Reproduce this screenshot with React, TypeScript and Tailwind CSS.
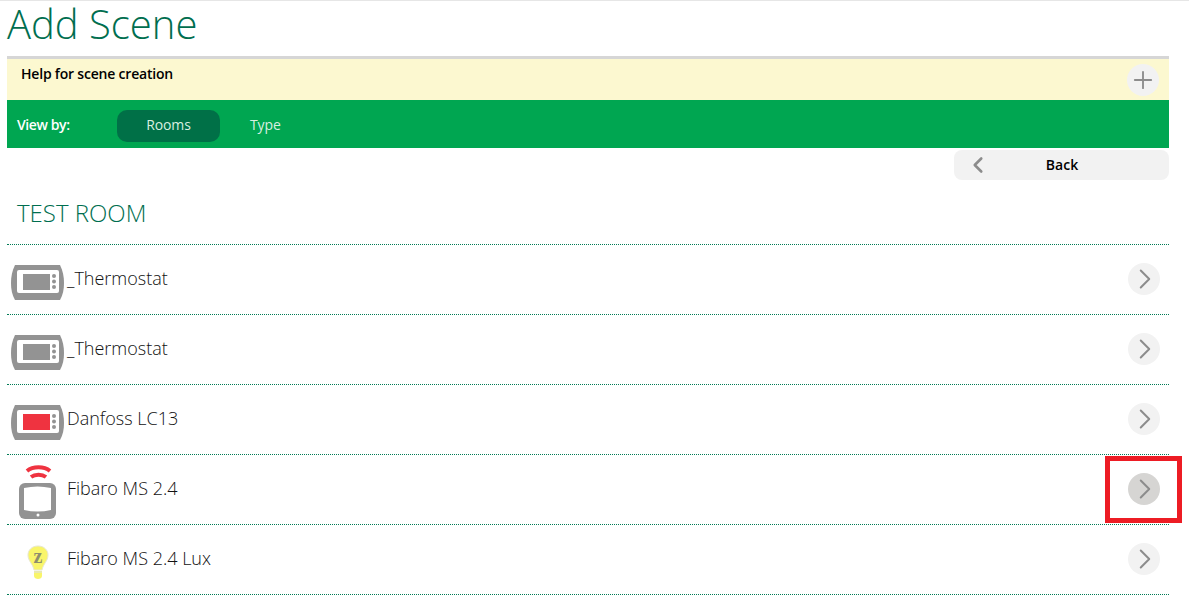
import { ChevronLeft, ChevronRight, Plus } from "lucide-react";

const ThermostatIcon = ({ screen }: { screen: string }) => (
  <svg width="54" height="36" viewBox="0 0 54 36">
    <path d="M4 0H49C52 6 53 12 53 18C53 24 52 30 49 35H4C1 30 0 24 0 18C0 12 1 6 4 0Z" fill="#939393" />
    <rect x="6" y="5" width="42" height="23" rx="2" fill="#fff" />
    <rect x="12" y="9" width="27" height="16" fill={screen} />
    <circle cx="43" cy="11" r="2" fill="#939393" />
    <circle cx="43" cy="16.500" r="2" fill="#939393" />
    <circle cx="43" cy="22" r="2" fill="#939393" />
  </svg>
);

const MotionIcon = () => (
  <svg width="38" height="56" viewBox="0 0 38 56">
    <path d="M8 6C14 1 25 1 31 6" fill="none" stroke="#ef3340" strokeWidth="4" />
    <path d="M12 12C16 9 23 9 27 12" fill="none" stroke="#ef3340" strokeWidth="4" />
    <rect x="0" y="18" width="37" height="36" rx="6" fill="#939393" />
    <path d="M5 23C14 21 23 21 32 23V45C23 47 14 47 5 45Z" fill="#fff" />
    <circle cx="19" cy="50" r="1.500" fill="#fff" />
  </svg>
);

const BulbIcon = () => (
  <svg width="22" height="35" viewBox="0 0 22 35">
    <path
      d="M11 1C5 1 1 5 1 10C1 16 6 19 7 25H15C16 19 21 16 21 10C21 5 17 1 11 1Z"
      fill="#f9f56a"
      stroke="#e8e8d0"
    />
    <rect x="7" y="26" width="8" height="2" fill="#e8e8b0" />
    <path d="M7 28H15V31C15 33 13 34 11 34C9 34 7 33 7 31Z" fill="#f9f56a" />
    <text x="11" y="18" textAnchor="middle" fontSize="20" fontWeight="700" fill="#8e8e6e" fontFamily="'Liberation Serif', serif">
      z
    </text>
  </svg>
);

const rows = [
  { name: "_Thermostat", icon: <ThermostatIcon screen="#939393" /> },
  { name: "_Thermostat", icon: <ThermostatIcon screen="#939393" /> },
  { name: "Danfoss LC13", icon: <ThermostatIcon screen="#ef3340" /> },
  { name: "Fibaro MS 2.4", icon: <MotionIcon />, active: true },
  { name: "Fibaro MS 2.4 Lux", icon: <BulbIcon /> },
];

export default function App() {
  return (
    <div className="relative h-[600px] w-[1189px] overflow-hidden border-t border-[#e6e6e6] bg-white px-[7px] font-['Open_Sans',sans-serif]">
      <h1 className="h-[55px] text-[40px] leading-[46px] font-light text-[#006e4f]">Add Scene</h1>
      <div className="mr-[20px] w-[1162px]">
        <div className="flex h-[44px] justify-between border-t-[3px] border-[#d6d6d6] bg-[#fcf8d0] pr-[10px] pl-[14px]">
          <span className="pt-[5px] text-[14px] leading-[20px] font-semibold tracking-[-0.2px] text-black">
            Help for scene creation
          </span>
          <button className="mt-[5px] flex h-[32px] w-[32px] items-center justify-center rounded-full bg-[#f2f2f2] text-[#8c8c8c]">
            <Plus size={28} strokeWidth={1.600} />
          </button>
        </div>
        <div className="flex h-[48px] items-center bg-[#00a651] pl-[10px]">
          <span className="w-[100px] text-[14px] font-semibold tracking-[-0.4px] text-white">View by:</span>
          <span className="mt-[4px] flex h-[32px] w-[103px] items-center justify-center rounded-[10px] bg-[#007047] pb-[4px] text-[14px] tracking-[-0.1px] text-[#d8efe0]">
            Rooms
          </span>
          <span className="ml-[30px] text-[14px] tracking-[-0.1px] text-[#d8efe0]">Type</span>
        </div>
        <div className="flex justify-end pt-[2px]">
          <button className="flex h-[30px] w-[215px] items-center rounded-[8px] bg-[#f2f2f2] pl-[11px] text-[14px] font-semibold text-black">
            <ChevronLeft size={26} strokeWidth={2.400} className="text-[#8c8c8c]" />
            <span className="ml-[41px] w-[60px] pb-[2px] text-center">Back</span>
          </button>
        </div>
        <h2 className="h-[64px] pt-[17px] pl-[10px] text-[24px] leading-[32px] font-light text-[#006e4f]">TEST ROOM</h2>
        <div className="border-t border-dotted border-[#007a55]">
          {rows.map((row, i) => (
            <div key={i} className="flex h-[70px] items-center border-b border-dotted border-[#007a55]">
              <div className="flex w-[60px] shrink-0 justify-center pt-[6px] pr-[2px] pl-[4px]">{row.icon}</div>
              <span className="-mt-[3px] text-[18px] font-light text-[#111111]">{row.name}</span>
              <span
                className={`mr-[9px] ml-auto -mt-[2px] flex h-[32px] w-[32px] items-center justify-center rounded-full text-[#8c8c8c] ${
                  row.active ? "bg-[#d6d5d3]" : "bg-[#f2f2f2]"
                }`}
              >
                <ChevronRight size={34} strokeWidth={1.400} className="shrink-0 translate-x-[1px]" />
              </span>
            </div>
          ))}
        </div>
      </div>
      <div className="absolute top-[455px] left-[1105px] h-[67px] w-[77px] border-[5px] border-[#ed1c24]" />
    </div>
  );
}
